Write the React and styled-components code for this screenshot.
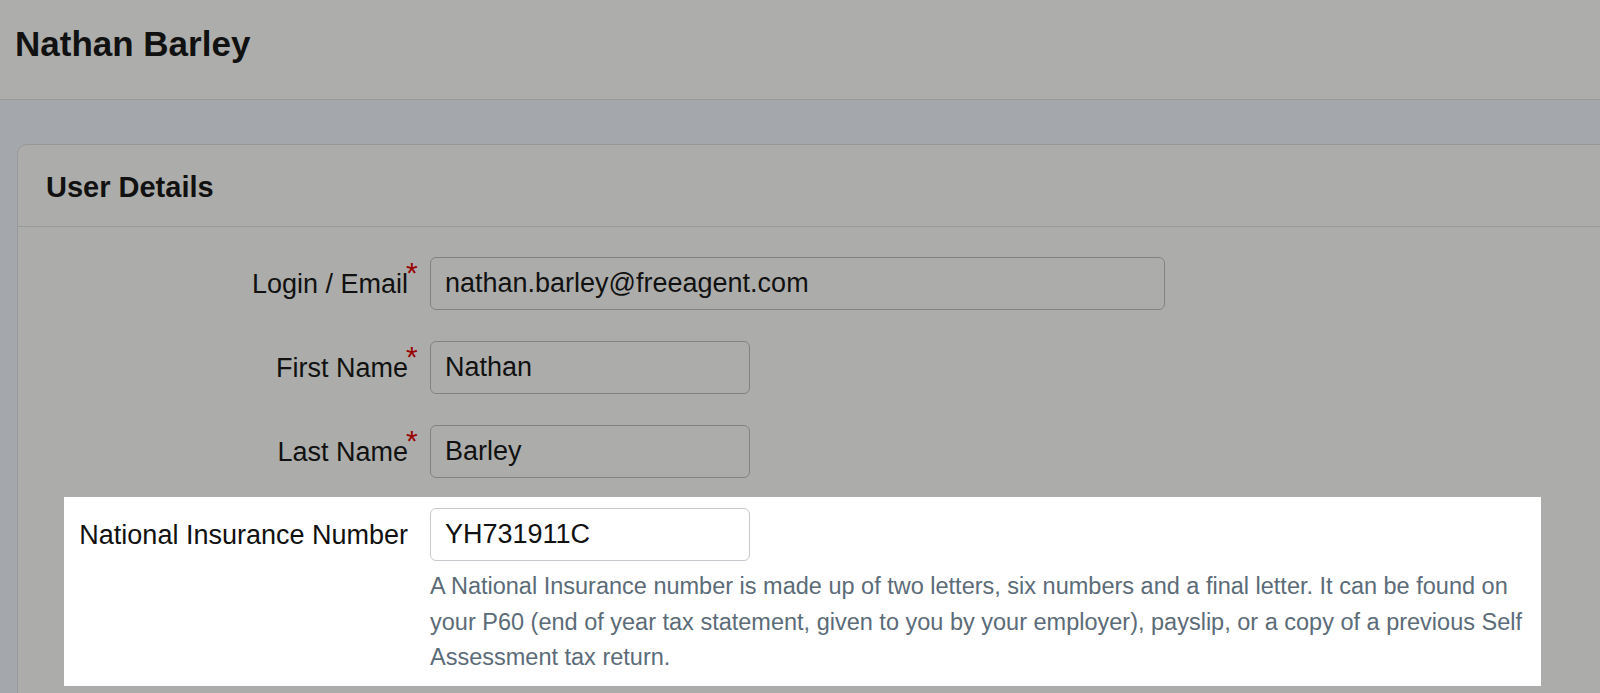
import React from "react";
import styled, { createGlobalStyle } from "styled-components";

const Global = createGlobalStyle`
  html, body { margin: 0; padding: 0; }
  body {
    background: #a4a7ab;
    font-family: "Liberation Sans", Arial, sans-serif;
    color: #111;
    overflow: hidden;
  }
`;

const Page = styled.div`
  height: 693px;
  overflow: hidden;
`;

const Header = styled.header`
  box-sizing: border-box;
  height: 100px;
  padding: 24px 15px 0;
  background: #adaeac;
  border-bottom: 1px solid #97999a;
`;

const Title = styled.h1`
  margin: 0;
  font-size: 35px;
  line-height: 40px;
  font-weight: 700;
  color: #111;
`;

const Main = styled.main`
  padding: 44px 0 0 17px;
`;

const Card = styled.section`
  margin-right: -24px;
  height: 620px;
  background: #acadab;
  border: 1px solid #979899;
  border-radius: 10px 10px 0 0;
`;

const CardHeader = styled.div`
  padding: 25px 28px 22px;
  border-bottom: 1px solid #999b9b;
`;

const CardTitle = styled.h2`
  margin: 0;
  font-size: 29px;
  line-height: 34px;
  font-weight: 700;
  color: #111;
`;

const Form = styled.div`
  padding-top: 30px;
  display: flex;
  flex-direction: column;
  gap: 31px;
`;

const Row = styled.div`
  display: grid;
  grid-template-columns: 344px auto;
  column-gap: 22px;
  align-items: center;
  margin-left: 46px;
  ${(p) =>
    p.$highlight &&
    `
    width: 1477px;
    margin-top: -12px;
    padding: 11px 0 10.5px;
    background: #ffffff;
  `}
`;

const Label = styled.label`
  position: relative;
  justify-self: end;
  font-size: 27px;
  line-height: 32px;
  white-space: nowrap;
  color: #111;
`;

const Required = styled.span`
  position: absolute;
  left: 100%;
  top: -10px;
  margin-left: -2px;
  font-size: 30px;
  line-height: 30px;
  color: #9a0202;
`;

const Input = styled.input`
  box-sizing: border-box;
  height: 53px;
  width: ${(p) => p.$w}px;
  justify-self: start;
  padding: 0 14px;
  font-family: "Liberation Sans", Arial, sans-serif;
  font-size: 27px;
  color: #111;
  background: ${(p) => (p.$light ? "#ffffff" : "transparent")};
  border: 1px solid ${(p) => (p.$light ? "#c6c9cd" : "#818386")};
  border-radius: 6px;
  outline: none;
`;

const Help = styled.p`
  grid-column: 2;
  margin: 8px 0 0;
  width: 1105px;
  font-size: 23.5px;
  line-height: 35.5px;
  color: #5b6b78;
`;

const fields = [
  { label: "Login / Email", value: "nathan.barley@freeagent.com", w: 735 },
  { label: "First Name", value: "Nathan", w: 320 },
  { label: "Last Name", value: "Barley", w: 320 },
];

export default function App() {
  return (
    <Page>
      <Global />
      <Header>
        <Title>Nathan Barley</Title>
      </Header>
      <Main>
        <Card>
          <CardHeader>
            <CardTitle>User Details</CardTitle>
          </CardHeader>
          <Form>
            {fields.map((f) => (
              <Row key={f.label}>
                <Label>
                  {f.label}
                  <Required>*</Required>
                </Label>
                <Input $w={f.w} defaultValue={f.value} readOnly />
              </Row>
            ))}
            <Row $highlight>
              <Label>National Insurance Number</Label>
              <Input $w={320} $light defaultValue="YH731911C" readOnly />
              <Help>
                A National Insurance number is made up of two letters, six numbers and a final
                letter. It can be found on your P60 (end of year tax statement, given to you by
                your employer), payslip, or a copy of a previous Self Assessment tax return.
              </Help>
            </Row>
          </Form>
        </Card>
      </Main>
    </Page>
  );
}
